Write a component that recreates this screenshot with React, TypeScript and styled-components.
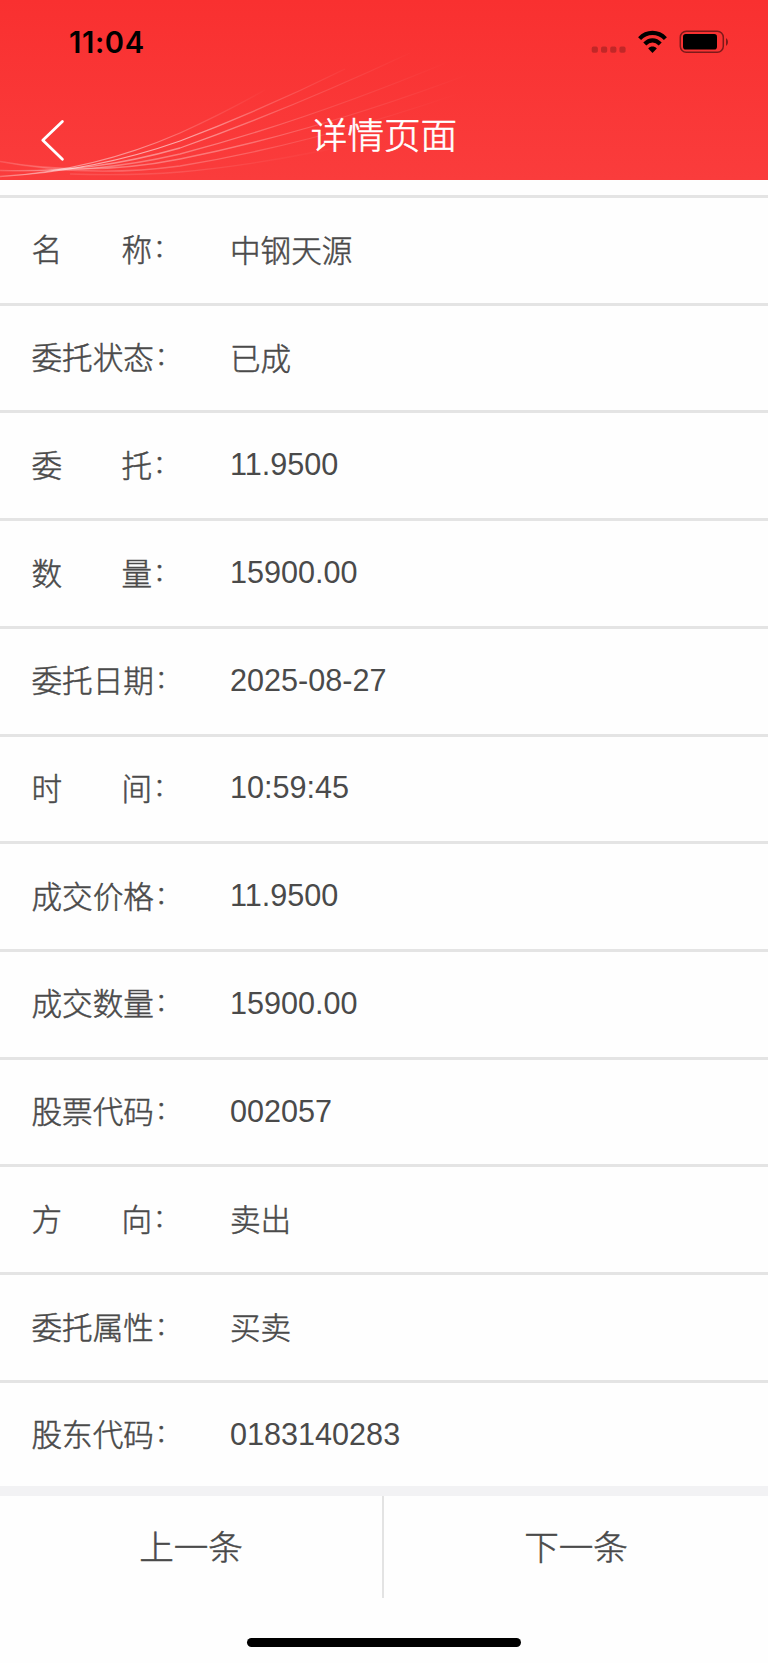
import React from 'react';
import styled, { createGlobalStyle } from 'styled-components';

const GlobalStyle = createGlobalStyle`
  * { box-sizing: border-box; }
  body {
    margin: 0;
    background: #fff;
    font-family: 'Liberation Sans', 'Noto Sans CJK SC', sans-serif;
    color: #4a4a4a;
  }
`;

const Screen = styled.div`
  width: 768px;
  height: 1663px;
  display: flex;
  flex-direction: column;
  background: #fefefe;
  overflow: hidden;
`;

const Header = styled.header`
  position: relative;
  flex: none;
  height: 180px;
  display: flex;
  flex-direction: column;
  background: linear-gradient(#f93030, #fa3c3c);
`;

const Waves = styled.svg`
  position: absolute;
  left: 0;
  top: 0;
`;

const StatusBar = styled.div`
  position: relative;
  height: 84px;
  padding: 0 39px 0 69px;
  display: flex;
  justify-content: space-between;
  align-items: center;
`;

const Clock = styled.time`
  padding-top: 2px;
  font: 600 29.2px/36px Inter, sans-serif;
  color: #000;
  letter-spacing: 0.6px;
`;

const StatusIcons = styled.svg`
  display: block;
`;

const NavBar = styled.div`
  position: relative;
  flex: 1;
  display: grid;
  grid-template-columns: 100px 1fr 100px;
  align-items: center;
`;

const BackButton = styled.button`
  border: 0;
  padding: 16px 0 0 40px;
  background: none;
  display: flex;
`;

const Title = styled.h1`
  margin: 0;
  padding-top: 3px;
  text-align: center;
  font: 300 36.6px/52px 'Noto Sans CJK SC', sans-serif;
  -webkit-text-stroke: 0.6px currentColor;
  color: #fff;
`;

const List = styled.dl`
  flex: none;
  margin: 15px 0 0;
  height: 1291px;
`;

const Row = styled.div`
  height: 107.73px;
  border-top: 3px solid #e4e4e4;
  display: flex;
  align-items: center;
  padding: 0 31px;
  font-size: 30.6px;
  line-height: 44px;
`;

const Label = styled.dt`
  width: 199px;
  padding-left: 0.5px;
  white-space: pre;
  font-weight: 300;
  -webkit-text-stroke: 0.5px currentColor;
`;

const Colon = styled.span`
  margin-left: 1px;
  font-size: 25px;
  line-height: 1;
  vertical-align: 4px;
`;

const Value = styled.dd<{ $numeric: boolean }>`
  margin: 0;
  font-weight: ${({ $numeric }) => ($numeric ? 400 : 300)};
  padding: ${({ $numeric }) => ($numeric ? '0 0 3px' : '1px 0 0')};
  -webkit-text-stroke: ${({ $numeric }) => ($numeric ? '0' : '0.5px currentColor')};
`;

const Pager = styled.nav`
  flex: none;
  display: flex;
  height: 112px;
  border-top: 10px solid #f2f2f4;
`;

const PagerButton = styled.button<{ $divided?: boolean }>`
  width: 384px;
  padding: 0 0 4px;
  border: 0;
  border-right: ${({ $divided }) => ($divided ? '2px solid #e3e3e3' : '0')};
  background: none;
  font: 300 34.6px/50px 'Noto Sans CJK SC', sans-serif;
  -webkit-text-stroke: 0.5px currentColor;
  color: #4a4a4a;
`;

const HomeArea = styled.footer`
  flex: 1;
  display: flex;
  justify-content: center;
  align-items: flex-end;
  padding-bottom: 16px;
`;

const HomeIndicator = styled.div`
  width: 274px;
  height: 9px;
  border-radius: 5px;
  background: #000;
`;

const GAP = '\u00a0'.repeat(7);

const rows: [string, string][] = [
  [`名${GAP}称`, '中钢天源'],
  ['委托状态', '已成'],
  [`委${GAP}托`, '11.9500'],
  [`数${GAP}量`, '15900.00'],
  ['委托日期', '2025-08-27'],
  [`时${GAP}间`, '10:59:45'],
  ['成交价格', '11.9500'],
  ['成交数量', '15900.00'],
  ['股票代码', '002057'],
  [`方${GAP}向`, '卖出'],
  ['委托属性', '买卖'],
  ['股东代码', '0183140283'],
];

// Each strand: path, opacity, and the x at which it has faded out.
const strands: [string, number, number][] = [
  ['M0 176.5 C60 173 118 160 180 133 Q222 114 265 90', 0.6, 270],
  ['M0 176.5 C60 173 118 163 180 141 Q262 110 345 69', 0.75, 360],
  ['M0 170.5 C70 172 120 165 180 148 Q290 109 410 53', 0.55, 415],
  ['M0 170.5 C70 172 120 168 180 154 Q310 120 460 57', 0.42, 450],
  ['M0 161.5 C60 172 120 171 180 159 Q320 131 480 70', 0.42, 470],
  ['M0 161.5 C60 173 120 174 180 166 Q320 143 480 86', 0.3, 460],
  ['M70 174 Q130 176 180 172 Q270 164 380 138', 0.16, 380],
];

export default function App() {
  return (
    <Screen>
      <GlobalStyle />
      <Header>
        <Waves width="768" height="180" fill="none" strokeWidth="1.3">
          <defs>
            {strands.map(([, , end], i) => (
              <linearGradient key={i} id={`fade${i}`} gradientUnits="userSpaceOnUse" x1="0" y1="0" x2={end} y2="0">
                <stop offset="0" stopColor="#fff" stopOpacity="0.2" />
                <stop offset="0.2" stopColor="#fff" stopOpacity="0.75" />
                <stop offset="0.5" stopColor="#fff" stopOpacity="0.75" />
                <stop offset="0.72" stopColor="#fff" stopOpacity="0.28" />
                <stop offset="1" stopColor="#fff" stopOpacity="0" />
              </linearGradient>
            ))}
          </defs>
          {strands.map(([d, opacity], i) => (
            <path key={i} d={d} stroke={`url(#fade${i})`} opacity={opacity} />
          ))}
        </Waves>
        <StatusBar>
          <Clock>11:04</Clock>
          <StatusIcons width="138" height="26" viewBox="591 29 138 26" fill="none">
            <g fill="#000" opacity="0.22">
              <rect x="591.7" y="46.6" width="6.2" height="6.2" rx="1.8" />
              <rect x="601" y="46.6" width="6.2" height="6.2" rx="1.8" />
              <rect x="610.2" y="46.6" width="6.2" height="6.2" rx="1.8" />
              <rect x="619.4" y="46.6" width="6.2" height="6.2" rx="1.8" />
            </g>
            <g stroke="#000" strokeWidth="4.2">
              <path d="M639.6 38.6 C647 31 658 31 665.4 38.6" />
              <path d="M644.8 44 C649.4 39.2 655.6 39.2 660.2 44" />
            </g>
            <path d="M648.2 48.4 C650.6 46 654.4 46 656.8 48.4 L652.5 52.9 Z" fill="#000" />
            <rect x="680.3" y="31.2" width="43" height="21" rx="6" stroke="#000" strokeOpacity="0.5" strokeWidth="1.5" />
            <rect x="683" y="34" width="34" height="15.6" rx="2.8" fill="#000" />
            <path d="M726 38.2 C728.6 39.4 728.6 44.4 726 45.8 Z" fill="#000" fillOpacity="0.5" />
          </StatusIcons>
        </StatusBar>
        <NavBar>
          <BackButton aria-label="返回">
            <svg width="26" height="44" viewBox="0 0 26 44" fill="none">
              <path d="M22.4 3.4 L2.8 22.2 L22.4 41.2" stroke="#fff" strokeWidth="2.8" strokeLinecap="round" strokeLinejoin="round" />
            </svg>
          </BackButton>
          <Title>详情页面</Title>
        </NavBar>
      </Header>
      <List>
        {rows.map(([label, value]) => (
          <Row key={label}>
            <Label>
              {label}
              <Colon>：</Colon>
            </Label>
            <Value $numeric={/^\d/.test(value)}>{value}</Value>
          </Row>
        ))}
      </List>
      <Pager>
        <PagerButton $divided>上一条</PagerButton>
        <PagerButton>下一条</PagerButton>
      </Pager>
      <HomeArea>
        <HomeIndicator />
      </HomeArea>
    </Screen>
  );
}
